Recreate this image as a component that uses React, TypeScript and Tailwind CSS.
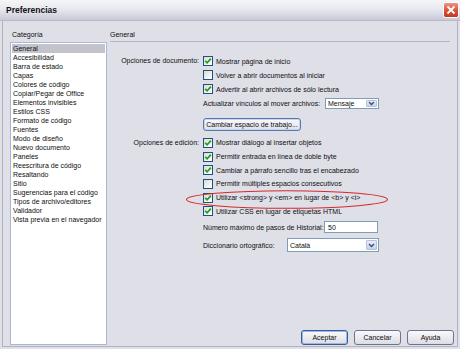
import type { ReactNode } from 'react';

const CATEGORIES = [
  'General', 'Accesibilidad', 'Barra de estado', 'Capas', 'Colores de código',
  'Copiar/Pegar de Office', 'Elementos invisibles', 'Estilos CSS', 'Formato de código',
  'Fuentes', 'Modo de diseño', 'Nuevo documento', 'Paneles', 'Reescritura de código',
  'Resaltando', 'Sitio', 'Sugerencias para el código', 'Tipos de archivo/editores',
  'Validador', 'Vista previa en el navegador',
];

function Check({ on }: { on: boolean }) {
  return (
    <span className="flex h-[10px] w-[10px] shrink-0 items-center justify-center border border-[#1c5180] bg-gradient-to-br from-[#dcdcd4] to-white">
      {on && (
        <svg width="8" height="8" viewBox="0 0 8 8">
          <path d="M1.2 3.8 L3.1 5.8 L6.9 1.6" fill="none" stroke="#1f9f1f" strokeWidth="1.7" />
        </svg>
      )}
    </span>
  );
}

function CheckRow({ on, children, h }: { on: boolean; children: ReactNode; h: string }) {
  return (
    <div className={`flex items-center gap-[3px] ${h}`}>
      <Check on={on} />
      <span className="whitespace-nowrap">{children}</span>
    </div>
  );
}

function Combo({ value, w }: { value: string; w: string }) {
  return (
    <div className={`flex h-full items-stretch border border-[#7f9db9] bg-white ${w}`}>
      <span className="flex flex-1 items-center pl-[2px]">{value}</span>
      <span className="m-[1px] flex w-[11px] items-center justify-center rounded-[1px] border border-[#b3c1dc] bg-gradient-to-b from-[#e9eef9] to-[#c6d2ec]">
        <svg width="7" height="5" viewBox="0 0 7 5">
          <path d="M1 1 L3.5 3.5 L6 1" fill="none" stroke="#3d4d6e" strokeWidth="1.4" />
        </svg>
      </span>
    </div>
  );
}

function Btn({ children, focus, w }: { children: ReactNode; focus?: boolean; w: string }) {
  return (
    <div
      className={`flex h-[15px] items-center justify-center rounded-[3px] border bg-gradient-to-b from-[#fafafc] to-[#dcdce4] ${w} ${
        focus ? 'border-[#3c5a94] shadow-[inset_0_0_0_1px_#9bb8ea]' : 'border-[#6a7590]'
      }`}
    >
      {children}
    </div>
  );
}

export default function App() {
  return (
    <div className="relative flex h-[349px] w-[460px] flex-col overflow-hidden bg-[#dfdfe8] font-['Liberation_Sans',Arial,sans-serif] text-[7px] leading-[9px] text-[#0e0e0e]">
      {/* barra de título */}
      <div className="flex h-[21px] shrink-0 items-center justify-between border-b border-[#b9b9c8] bg-gradient-to-b from-[#f6f6f9] via-[#e6e6ee] to-[#c9c9d7] pl-[6px] pr-[1px]">
        <span className="text-[8.5px] font-bold text-[#111]">Preferencias</span>
        <svg width="16" height="16" viewBox="0 0 16 16">
          <defs>
            <linearGradient id="cls" x1="0" y1="0" x2="0" y2="1">
              <stop offset="0" stopColor="#ee9a88" />
              <stop offset="0.5" stopColor="#d9553c" />
              <stop offset="1" stopColor="#c2361f" />
            </linearGradient>
          </defs>
          <rect x="0.5" y="0.5" width="15" height="15" rx="2" fill="url(#cls)" stroke="#fff" />
          <path d="M4.5 4.5 L11.5 11.5 M11.5 4.5 L4.5 11.5" stroke="#fff" strokeWidth="1.8" />
        </svg>
      </div>

      {/* cuerpo */}
      <div className="mx-[2px] mb-[2px] flex flex-1 gap-[3px] border-x border-b border-[#b3b3c0] pb-[1px] pl-[7px] pr-[3px] pt-[7px]">
        {/* categorías */}
        <div className="flex w-[97px] flex-col">
          <div className="h-[14px] pl-[2px] pt-[2px]">Categoría</div>
          <div className="flex-1 border border-[#a7b8d0] bg-white p-[1px]">
            {CATEGORIES.map((c, i) => (
              <div key={c} className={`h-[9px] whitespace-nowrap pl-[1px] ${i === 0 ? 'bg-[#c3c3cc]' : ''}`}>
                {c}
              </div>
            ))}
          </div>
        </div>

        {/* panel General */}
        <div className="flex flex-1 flex-col">
          <div className="mr-[4px] h-[14px] border-b border-[#b6b6c2] pt-[2px]">General</div>

          <div className="mt-[12px] flex">
            <div className="h-[14px] w-[90px] pr-[1px] text-right leading-[14px]">Opciones de documento:</div>
            <div className="ml-[3px] flex flex-col">
              <CheckRow on h="h-[14px]">Mostrar página de inicio</CheckRow>
              <CheckRow on={false} h="h-[14px]">Volver a abrir documentos al iniciar</CheckRow>
              <CheckRow on h="h-[14px]">Advertir al abrir archivos de sólo lectura</CheckRow>
              <div className="flex h-[15px] items-center gap-[5px] py-[2px]">
                <span className="w-[117px] whitespace-nowrap">Actualizar vínculos al mover archivos:</span>
                <Combo value="Mensaje" w="w-[54px]" />
              </div>
              <div className="mt-[7px] flex">
                <div className="flex h-[13px] w-[98px] items-center justify-center rounded-[3px] border border-[#5b78aa] bg-gradient-to-b from-[#fbfbfd] to-[#dedee8] shadow-[inset_0_0_0_1px_#c5d6f2]">
                  Cambiar espacio de trabajo...
                </div>
              </div>
            </div>
          </div>

          <div className="mt-[5px] flex">
            <div className="h-[13.7px] w-[90px] pr-[1px] text-right leading-[13.7px]">Opciones de edición:</div>
            <div className="ml-[3px] flex flex-col">
              <CheckRow on h="h-[13.7px]">Mostrar diálogo al insertar objetos</CheckRow>
              <CheckRow on h="h-[13.7px]">Permitir entrada en línea de doble byte</CheckRow>
              <CheckRow on h="h-[13.7px]">Cambiar a párrafo sencillo tras el encabezado</CheckRow>
              <CheckRow on={false} h="h-[13.7px]">Permitir múltiples espacios consecutivos</CheckRow>
              <CheckRow on h="h-[13.7px]">Utilizar &lt;strong&gt; y &lt;em&gt; en lugar de &lt;b&gt; y &lt;i&gt;</CheckRow>
              <CheckRow on h="h-[13.7px]">Utilizar CSS en lugar de etiquetas HTML</CheckRow>
              <div className="mt-[2px] flex h-[14px] items-center gap-[3px] py-[1px]">
                <span className="w-[118px] whitespace-nowrap">Número máximo de pasos de Historial:</span>
                <div className="flex h-full w-[54px] items-center border border-[#7f9db9] bg-white pl-[3px]">50</div>
              </div>
              <div className="mt-[4px] flex h-[14px] items-center gap-[2px]">
                <span className="w-[82px] whitespace-nowrap">Diccionario ortográfico:</span>
                <Combo value="Català" w="w-[92px]" />
              </div>
            </div>
          </div>

          <div className="mt-auto flex justify-end gap-[6px]">
            <Btn focus w="w-[47px]">Aceptar</Btn>
            <Btn w="w-[47px]">Cancelar</Btn>
            <Btn w="w-[47px]">Ayuda</Btn>
          </div>
        </div>
      </div>

      {/* anotación */}
      <svg className="pointer-events-none absolute left-[185px] top-[189px]" width="204" height="21" viewBox="0 0 204 21">
        <ellipse cx="102" cy="10.5" rx="100.5" ry="8.8" fill="none" stroke="#d42a2a" strokeWidth="1.1" />
      </svg>
    </div>
  );
}
